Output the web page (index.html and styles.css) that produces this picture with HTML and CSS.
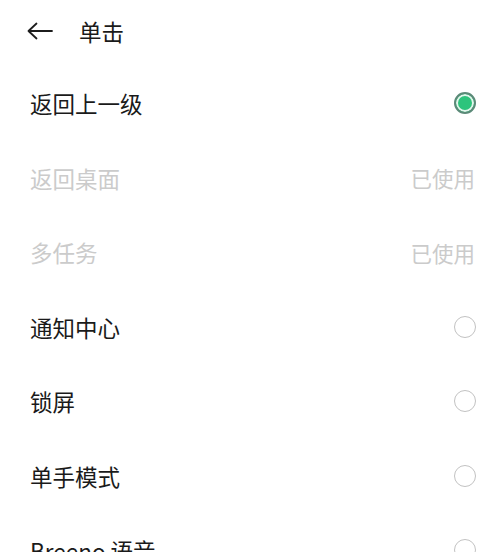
FILE: index.html
```html
<!DOCTYPE html>
<html lang="zh-CN">
<head>
  <meta charset="UTF-8">
  <meta name="viewport" content="width=device-width, initial-scale=1.0">
  <link rel="stylesheet" href="styles.css">
  <title>单击</title>
</head>
<body>
  <div class="page">
    <div class="header">
      <svg class="back" width="26" height="18" viewBox="0 0 26 18">
        <path d="M1.5 9 H25 M9.5 1.5 L1.5 9 L9.5 16.5" fill="none" stroke="#1c1c1c" stroke-width="1.8" stroke-linecap="round" stroke-linejoin="round"/>
      </svg>
      <h1 class="title">单击</h1>
    </div>
    <ul class="options">
      <li class="option">
        <span class="label">返回上一级</span>
        <span class="radio checked"></span>
      </li>
      <li class="option disabled">
        <span class="label">返回桌面</span>
        <span class="note">已使用</span>
      </li>
      <li class="option disabled">
        <span class="label">多任务</span>
        <span class="note">已使用</span>
      </li>
      <li class="option">
        <span class="label">通知中心</span>
        <span class="radio"></span>
      </li>
      <li class="option">
        <span class="label">锁屏</span>
        <span class="radio"></span>
      </li>
      <li class="option">
        <span class="label">单手模式</span>
        <span class="radio"></span>
      </li>
      <li class="option">
        <span class="label">Breeno 语音</span>
        <span class="radio"></span>
      </li>
    </ul>
  </div>
</body>
</html>
```

FILE: styles.css
```css
body {
  margin: 0;
  padding: 0;
  background: #fff;
  font-family: "Noto Sans CJK SC", "Noto Sans", sans-serif;
  color: #1a1a1a;
  overflow: hidden;
}
.page {
  height: 552px;
  overflow: hidden;
}
.header {
  display: flex;
  align-items: center;
  height: 62px;
  padding-left: 27px;
}
.back {
  display: block;
}
.title {
  margin: 0 0 0 26px;
  font-size: 22.5px;
  font-weight: 400;
  line-height: 1;
}
.options {
  list-style-type: none;
  margin: 4px 0 0;
  padding: 0;
}
.option {
  display: flex;
  align-items: center;
  justify-content: space-between;
  height: 74.5px;
  padding: 0 24px 0 30px;
  font-size: 22.5px;
}
.disabled {
  color: #cbcbcb;
}
.note {
  font-size: 21.5px;
  margin-right: 1px;
}
.radio {
  width: 22px;
  height: 22px;
  box-sizing: border-box;
  border: 1.5px solid #c2c2c2;
  border-radius: 50%;
}
.radio.checked {
  border: 2px solid #5b8a78;
  background: #2dc47c;
  box-shadow: inset 0 0 0 2px #e3f5ec;
}
```
